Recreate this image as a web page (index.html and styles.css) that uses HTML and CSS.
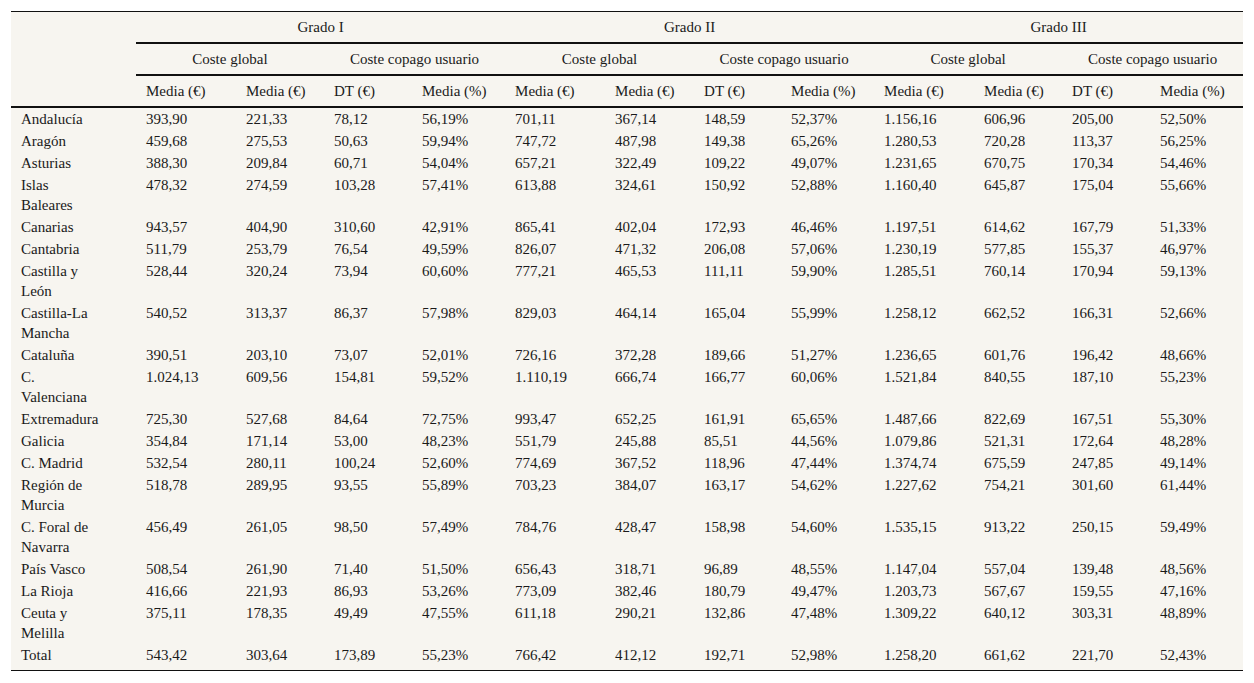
FILE: index.html
```html
<!DOCTYPE html>
<html lang="es">
<head>
<meta charset="utf-8">
<title>Coste por grado</title>
<link rel="stylesheet" href="styles.css">
</head>
<body>
<table class="data">
  <colgroup>
    <col class="c-name">
    <col class="c-a"><col class="c-b"><col class="c-c"><col class="c-d">
    <col class="c-a"><col class="c-b2"><col class="c-c2"><col class="c-d">
    <col class="c-a"><col class="c-b"><col class="c-c"><col class="c-d">
  </colgroup>
  <thead>
    <tr>
      <th class="corner" rowspan="3"></th>
      <th class="grp" colspan="4">Grado I</th>
      <th class="grp" colspan="4">Grado II</th>
      <th class="grp" colspan="4">Grado III</th>
    </tr>
    <tr>
      <th class="grp" colspan="2">Coste global</th>
      <th class="grp" colspan="2">Coste copago usuario</th>
      <th class="grp" colspan="2">Coste global</th>
      <th class="grp" colspan="2">Coste copago usuario</th>
      <th class="grp" colspan="2">Coste global</th>
      <th class="grp" colspan="2">Coste copago usuario</th>
    </tr>
    <tr>
      <th class="sub">Media (€)</th><th class="sub">Media (€)</th><th class="sub">DT (€)</th><th class="sub">Media (%)</th>
      <th class="sub">Media (€)</th><th class="sub">Media (€)</th><th class="sub">DT (€)</th><th class="sub">Media (%)</th>
      <th class="sub">Media (€)</th><th class="sub">Media (€)</th><th class="sub">DT (€)</th><th class="sub">Media (%)</th>
    </tr>
  </thead>
  <tbody>
    <tr><td class="name">Andalucía</td><td>393,90</td><td>221,33</td><td>78,12</td><td>56,19%</td><td>701,11</td><td>367,14</td><td>148,59</td><td>52,37%</td><td>1.156,16</td><td>606,96</td><td>205,00</td><td>52,50%</td></tr>
    <tr><td class="name">Aragón</td><td>459,68</td><td>275,53</td><td>50,63</td><td>59,94%</td><td>747,72</td><td>487,98</td><td>149,38</td><td>65,26%</td><td>1.280,53</td><td>720,28</td><td>113,37</td><td>56,25%</td></tr>
    <tr><td class="name">Asturias</td><td>388,30</td><td>209,84</td><td>60,71</td><td>54,04%</td><td>657,21</td><td>322,49</td><td>109,22</td><td>49,07%</td><td>1.231,65</td><td>670,75</td><td>170,34</td><td>54,46%</td></tr>
    <tr><td class="name">Islas Baleares</td><td>478,32</td><td>274,59</td><td>103,28</td><td>57,41%</td><td>613,88</td><td>324,61</td><td>150,92</td><td>52,88%</td><td>1.160,40</td><td>645,87</td><td>175,04</td><td>55,66%</td></tr>
    <tr><td class="name">Canarias</td><td>943,57</td><td>404,90</td><td>310,60</td><td>42,91%</td><td>865,41</td><td>402,04</td><td>172,93</td><td>46,46%</td><td>1.197,51</td><td>614,62</td><td>167,79</td><td>51,33%</td></tr>
    <tr><td class="name">Cantabria</td><td>511,79</td><td>253,79</td><td>76,54</td><td>49,59%</td><td>826,07</td><td>471,32</td><td>206,08</td><td>57,06%</td><td>1.230,19</td><td>577,85</td><td>155,37</td><td>46,97%</td></tr>
    <tr><td class="name">Castilla y León</td><td>528,44</td><td>320,24</td><td>73,94</td><td>60,60%</td><td>777,21</td><td>465,53</td><td>111,11</td><td>59,90%</td><td>1.285,51</td><td>760,14</td><td>170,94</td><td>59,13%</td></tr>
    <tr><td class="name">Castilla-La Mancha</td><td>540,52</td><td>313,37</td><td>86,37</td><td>57,98%</td><td>829,03</td><td>464,14</td><td>165,04</td><td>55,99%</td><td>1.258,12</td><td>662,52</td><td>166,31</td><td>52,66%</td></tr>
    <tr><td class="name">Cataluña</td><td>390,51</td><td>203,10</td><td>73,07</td><td>52,01%</td><td>726,16</td><td>372,28</td><td>189,66</td><td>51,27%</td><td>1.236,65</td><td>601,76</td><td>196,42</td><td>48,66%</td></tr>
    <tr><td class="name">C. Valenciana</td><td>1.024,13</td><td>609,56</td><td>154,81</td><td>59,52%</td><td>1.110,19</td><td>666,74</td><td>166,77</td><td>60,06%</td><td>1.521,84</td><td>840,55</td><td>187,10</td><td>55,23%</td></tr>
    <tr><td class="name">Extremadura</td><td>725,30</td><td>527,68</td><td>84,64</td><td>72,75%</td><td>993,47</td><td>652,25</td><td>161,91</td><td>65,65%</td><td>1.487,66</td><td>822,69</td><td>167,51</td><td>55,30%</td></tr>
    <tr><td class="name">Galicia</td><td>354,84</td><td>171,14</td><td>53,00</td><td>48,23%</td><td>551,79</td><td>245,88</td><td>85,51</td><td>44,56%</td><td>1.079,86</td><td>521,31</td><td>172,64</td><td>48,28%</td></tr>
    <tr><td class="name">C. Madrid</td><td>532,54</td><td>280,11</td><td>100,24</td><td>52,60%</td><td>774,69</td><td>367,52</td><td>118,96</td><td>47,44%</td><td>1.374,74</td><td>675,59</td><td>247,85</td><td>49,14%</td></tr>
    <tr><td class="name">Región de Murcia</td><td>518,78</td><td>289,95</td><td>93,55</td><td>55,89%</td><td>703,23</td><td>384,07</td><td>163,17</td><td>54,62%</td><td>1.227,62</td><td>754,21</td><td>301,60</td><td>61,44%</td></tr>
    <tr><td class="name">C. Foral de Navarra</td><td>456,49</td><td>261,05</td><td>98,50</td><td>57,49%</td><td>784,76</td><td>428,47</td><td>158,98</td><td>54,60%</td><td>1.535,15</td><td>913,22</td><td>250,15</td><td>59,49%</td></tr>
    <tr><td class="name">País Vasco</td><td>508,54</td><td>261,90</td><td>71,40</td><td>51,50%</td><td>656,43</td><td>318,71</td><td>96,89</td><td>48,55%</td><td>1.147,04</td><td>557,04</td><td>139,48</td><td>48,56%</td></tr>
    <tr><td class="name">La Rioja</td><td>416,66</td><td>221,93</td><td>86,93</td><td>53,26%</td><td>773,09</td><td>382,46</td><td>180,79</td><td>49,47%</td><td>1.203,73</td><td>567,67</td><td>159,55</td><td>47,16%</td></tr>
    <tr><td class="name">Ceuta y Melilla</td><td>375,11</td><td>178,35</td><td>49,49</td><td>47,55%</td><td>611,18</td><td>290,21</td><td>132,86</td><td>47,48%</td><td>1.309,22</td><td>640,12</td><td>303,31</td><td>48,89%</td></tr>
    <tr class="last"><td class="name">Total</td><td>543,42</td><td>303,64</td><td>173,89</td><td>55,23%</td><td>766,42</td><td>412,12</td><td>192,71</td><td>52,98%</td><td>1.258,20</td><td>661,62</td><td>221,70</td><td>52,43%</td></tr>
  </tbody>
</table>
</body>
</html>
```
FILE: styles.css
```css
html, body {
  margin: 0;
  padding: 0;
  background: #ffffff;
}

body {
  padding: 11px;
  font-family: "Liberation Serif", Tinos, "Times New Roman", Times, "DejaVu Serif", "Noto Serif", serif;
  font-size: 15px;
  color: #1a1a1a;
}

.data {
  width: 1232px;
  table-layout: fixed;
  border-collapse: separate;
  border-spacing: 0;
  background: #f7f5f0;
  border-top: 1px solid #111;
  border-bottom: 1px solid #111;
  font-family: inherit;
}

.data th,
.data td {
  font-family: "Liberation Serif", Tinos, "Times New Roman", Times, "DejaVu Serif", "Noto Serif", serif;
}

.c-name { width: 125px; }
.c-a { width: 100px; }
.c-b { width: 88px; }
.c-c { width: 88px; }
.c-d { width: 93px; }
.c-b2 { width: 89px; }
.c-c2 { width: 87px; }

th {
  font-weight: normal;
  line-height: 20px;
  padding: 5px 10px 5px 10px;
  vertical-align: middle;
  border-bottom: 2px solid #111;
  white-space: nowrap;
}

th.grp {
  text-align: center;
}

th.sub {
  text-align: left;
}

td {
  line-height: 20px;
  padding: 1px 10px;
  text-align: left;
  vertical-align: top;
  white-space: nowrap;
}

td.name {
  padding-right: 33px;
  white-space: normal;
}

tr.last td {
  padding-bottom: 5px;
}
```
